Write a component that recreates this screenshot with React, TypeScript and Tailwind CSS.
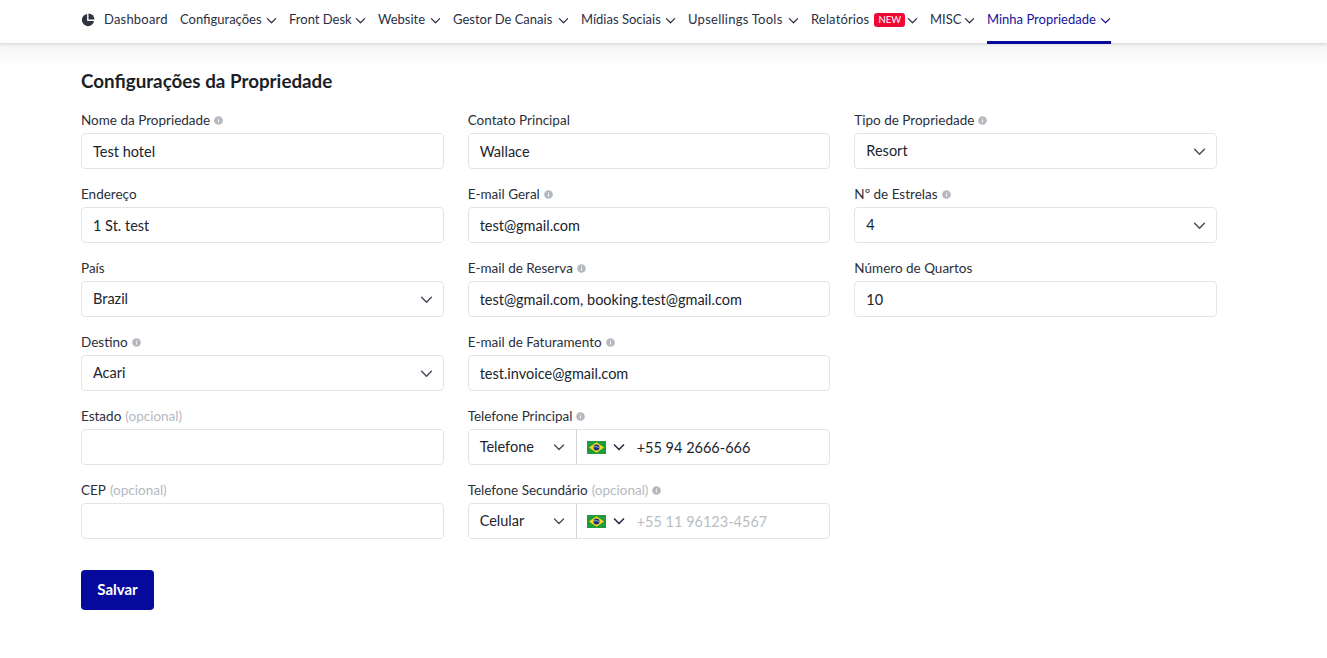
import React from "react";

const Chevron = ({ className = "", w = 1.3 }: { className?: string; w?: number }) => (
  <svg viewBox="0 0 12 12" fill="none" stroke="currentColor" strokeWidth={w} strokeLinecap="round" strokeLinejoin="round" className={className}>
    <path d="M1.5 4l4.5 4.5L10.5 4" />
  </svg>
);

const Info = () => (
  <svg viewBox="0 0 10 10" className="w-[9px] h-[9px] ml-[4px] shrink-0">
    <circle cx="5" cy="5" r="4.8" fill="#b4b8bf" />
    <rect x="4.4" y="4.3" width="1.2" height="3" fill="#f4f4f4" />
    <rect x="4.4" y="2.6" width="1.2" height="1.1" fill="#f4f4f4" />
  </svg>
);

const Flag = () => (
  <svg viewBox="0 0 19 13" className="w-[19px] h-[13px] shrink-0">
    <rect width="19" height="13" fill="#1f9a3c" />
    <path d="M9.5 1.2L17 6.5l-7.5 5.3L2 6.5z" fill="#f7d917" />
    <circle cx="9.5" cy="6.5" r="3" fill="#1c2f7a" />
    <path d="M6.7 5.8c2-.4 4-.1 5.6 1" stroke="#fff" strokeWidth=".6" fill="none" />
  </svg>
);

const nav: { t: string; w: string; track?: string; badge?: boolean }[] = [
  { t: "Configurações", w: "w-[97px]" },
  { t: "Front Desk", w: "w-[77px]" },
  { t: "Website", w: "w-[63px]" },
  { t: "Gestor De Canais", w: "w-[116px]" },
  { t: "Mídias Sociais", w: "w-[95px]" },
  { t: "Upsellings Tools", w: "w-[111px]", track: "tracking-[0.25px]" },
  { t: "Relatórios", w: "w-[107px]", track: "tracking-[0.15px]", badge: true },
  { t: "MISC", w: "w-[45px]" },
];

const Label = ({ text, opt, info }: { text: string; opt?: boolean; info?: boolean }) => (
  <div className="flex items-center h-[14px] mb-[6px] text-[13.5px] leading-[14px] text-[#2b2f3a] whitespace-nowrap">
    <span>{text}</span>
    {opt && <span className="text-[#b5b9c0] ml-[4px]">(opcional)</span>}
    {info && <Info />}
  </div>
);

const boxCls = "h-[36px] w-full rounded-[4px] border border-[#e3e5e8] bg-white flex items-center text-[14.5px] text-[#20242e]";

const Input = ({ value = "" }: { value?: string }) => (
  <div className={boxCls + " pl-[11px] pr-3"}><span className="translate-y-px">{value}</span></div>
);

const Select = ({ value }: { value: string }) => (
  <div className={boxCls + " pl-[11px] pr-[10px] justify-between"}>
    <span>{value}</span>
    <Chevron className="w-[13px] h-[13px] text-[#4a4f5a]" w={1.4} />
  </div>
);

const Phone = ({ kind, num, placeholder }: { kind: string; num: string; placeholder?: boolean }) => (
  <div className={boxCls}>
    <div className="w-[108px] h-full flex items-center justify-between pl-[11px] pr-[11px] border-r border-[#d5d7db] shrink-0">
      <span>{kind}</span>
      <Chevron className="w-[12px] h-[12px] text-[#4a4f5a]" w={1.4} />
    </div>
    <div className="pl-[10px] flex items-center">
      <Flag />
      <Chevron className="w-[12px] h-[12px] text-[#2b3448] ml-[7px]" w={1.7} />
      <span className={"translate-y-px ml-[12px] " + (placeholder ? "text-[#b9bcc2]" : "")}>{num}</span>
    </div>
  </div>
);

const Field = ({ children }: { children: React.ReactNode }) => <div className="h-[74px]">{children}</div>;

export default function App() {
  return (
    <div className="min-h-[658px] bg-white text-[#20242e]" style={{ fontFamily: 'Lato, sans-serif' }}>
      <header className="h-[43px] bg-white shadow-[0_1px_3px_rgba(0,0,0,0.14)] relative">
        <nav className="flex items-center h-full pl-[81px] pb-[3px] text-[13px] text-[#2b2f44] whitespace-nowrap">
          <svg viewBox="0 0 16 16" className="w-[14px] h-[14px] mr-[9px] text-[#2f3441]" fill="currentColor">
            <path d="M7 1.1A7 7 0 1 0 14.9 9H7z" />
            <path d="M8.6 0.6v6.8h6.8A6.9 6.9 0 0 0 8.6.6z" />
          </svg>
          <span className="w-[64px] tracking-[0.2px]">Dashboard</span>
          {nav.map((n) => (
            <span key={n.t} className={"flex items-center ml-3 " + n.w}>
              <span className={n.track ?? ""}>{n.t}</span>
              {n.badge && (
                <span className="ml-[5px] h-[14px] px-[4px] rounded-[3px] bg-[#ee0a34] text-white text-[9.5px] leading-[14px]">NEW</span>
              )}
              <Chevron className="w-[11px] h-[11px] ml-auto" />
            </span>
          ))}
          <span className="flex items-center ml-3 w-[124px] h-[44px] pb-[1px] self-start text-[#17129c] border-b-[3px] border-[#06099c]">
            <span>Minha Propriedade</span>
            <Chevron className="w-[11px] h-[11px] ml-auto" />
          </span>
        </nav>
      </header>

      <main className="bg-gradient-to-b from-[#f4f4f4] to-white to-[22px] pt-[26px] px-[81px] pb-[48px]">
        <div className="w-[1136px]">
          <h1 className="text-[18.8px] leading-[24px] font-bold text-[#1c1f28] mb-[20px]">Configurações da Propriedade</h1>
          <div className="grid grid-cols-3 gap-x-6">
            <div>
              <Field><Label text="Nome da Propriedade" info /><Input value="Test hotel" /></Field>
              <Field><Label text="Endereço" /><Input value="1 St. test" /></Field>
              <Field><Label text="País" /><Select value="Brazil" /></Field>
              <Field><Label text="Destino" info /><Select value="Acari" /></Field>
              <Field><Label text="Estado" opt /><Input /></Field>
              <Field><Label text="CEP" opt /><Input /></Field>
            </div>
            <div>
              <Field><Label text="Contato Principal" /><Input value="Wallace" /></Field>
              <Field><Label text="E-mail Geral" info /><Input value="test@gmail.com" /></Field>
              <Field><Label text="E-mail de Reserva" info /><Input value="test@gmail.com, booking.test@gmail.com" /></Field>
              <Field><Label text="E-mail de Faturamento" info /><Input value="test.invoice@gmail.com" /></Field>
              <Field><Label text="Telefone Principal" info /><Phone kind="Telefone" num="+55 94 2666-666" /></Field>
              <Field><Label text="Telefone Secundário" opt info /><Phone kind="Celular" num="+55 11 96123-4567" placeholder /></Field>
            </div>
            <div>
              <Field><Label text="Tipo de Propriedade" info /><Select value="Resort" /></Field>
              <Field><Label text="Nº de Estrelas" info /><Select value="4" /></Field>
              <Field><Label text="Número de Quartos" /><Input value="10" /></Field>
            </div>
          </div>
          <button className="mt-[13px] h-[40px] w-[73px] pb-[2px] rounded-[4px] bg-[#060a9c] text-white text-[15px] font-bold">Salvar</button>
        </div>
      </main>
    </div>
  );
}
